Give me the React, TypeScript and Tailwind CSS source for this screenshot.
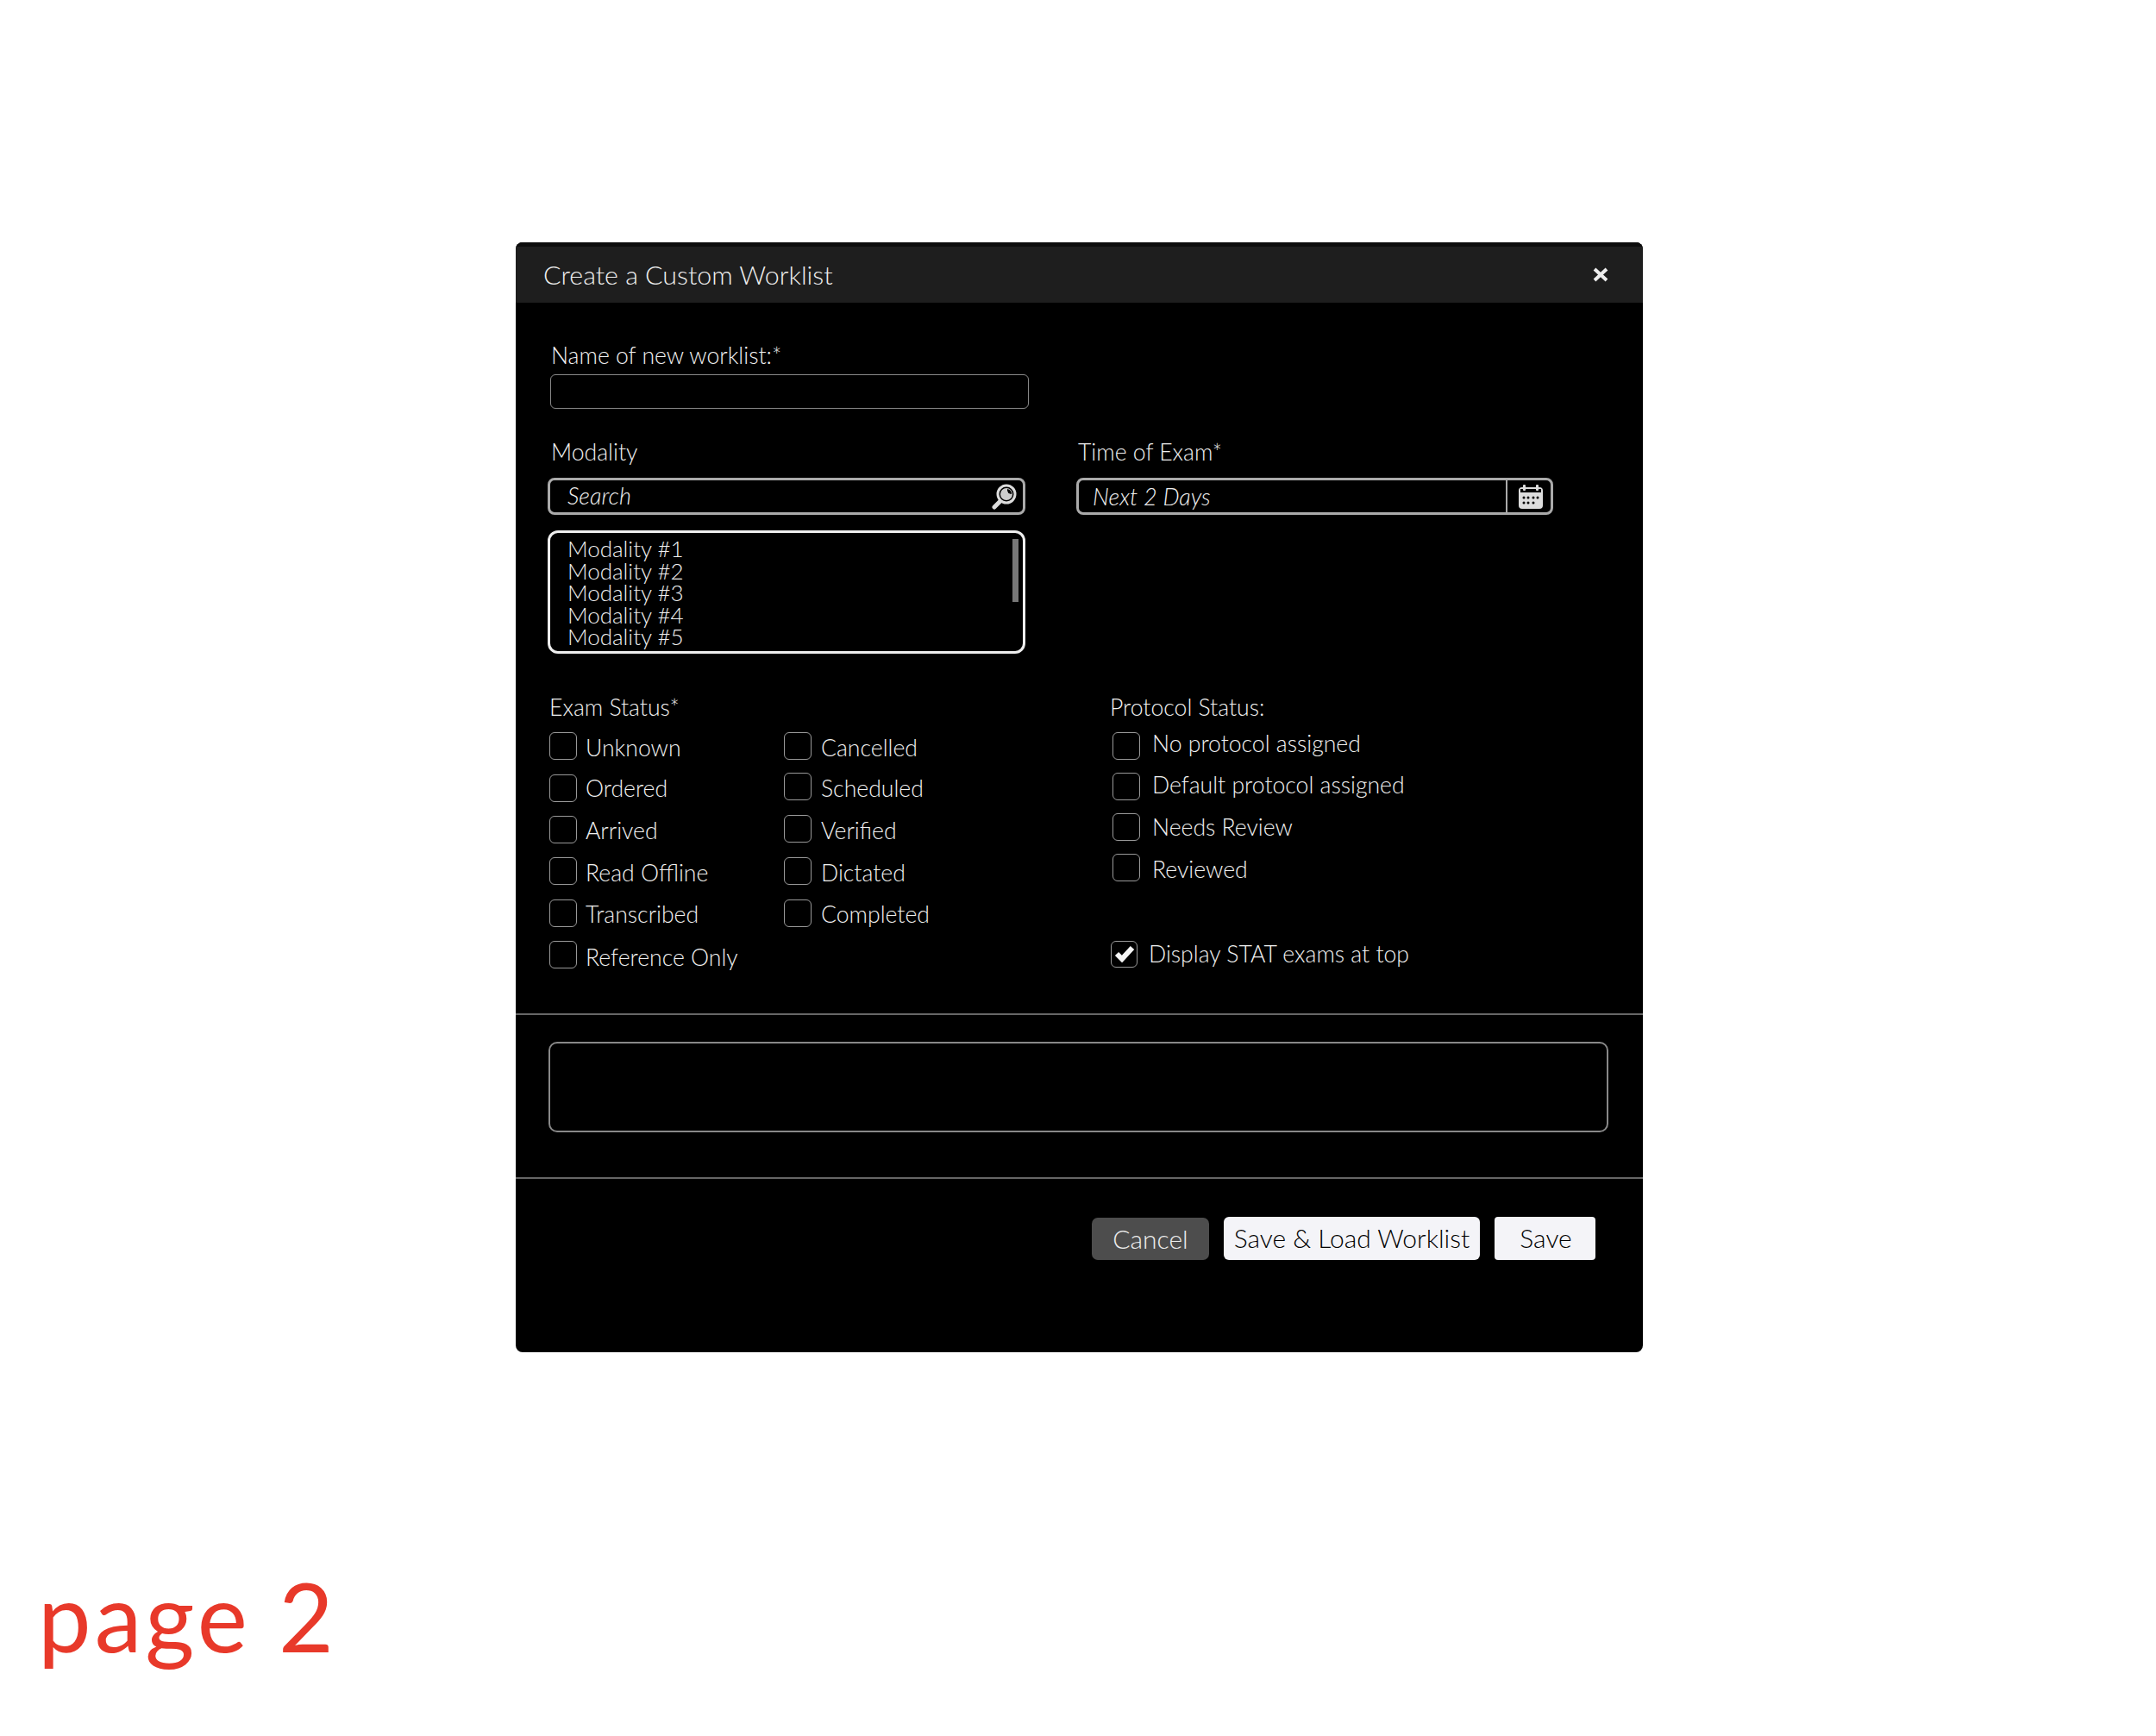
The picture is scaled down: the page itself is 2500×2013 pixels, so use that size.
const examLeft = [
    { label: "Unknown", row: "h-[49px]", text: "pt-[2px]" },
    { label: "Ordered", row: "h-[48px]", text: "pt-0" },
    { label: "Arrived", row: "h-[48px]", text: "pt-[1px]" },
    { label: "Read Offline", row: "h-[49px]", text: "pt-[2px]" },
    { label: "Transcribed", row: "h-[48px]", text: "pt-[1px]" },
    { label: "Reference Only", row: "h-[48px]", text: "pt-[3px]" },
];

const examRight = [
    { label: "Cancelled", row: "h-[47px]", text: "pt-[2px]" },
    { label: "Scheduled", row: "h-[49px]", text: "pt-[2px]" },
    { label: "Verified", row: "h-[49px]", text: "pt-[2px]" },
    { label: "Dictated", row: "h-[49px]", text: "pt-[2px]" },
    { label: "Completed", row: "h-[48px]", text: "pt-[1px]" },
];

const protocol = [
    { label: "No protocol assigned", row: "h-[47px]", text: "-mt-[3px]" },
    { label: "Default protocol assigned", row: "h-[47px]", text: "-mt-[2px]" },
    { label: "Needs Review", row: "h-[47px]", text: "pt-0" },
    { label: "Reviewed", row: "h-[100px]", text: "pt-[2px]" },
];

const modalities = ["Modality #1", "Modality #2", "Modality #3", "Modality #4", "Modality #5"];

type Item = { label: string; row: string; text: string };

const CheckRow = ({ item, gap }: { item: Item; gap: string }) => (
    <div className={`flex items-start ${item.row} ${gap}`}>
        <div className="w-[32px] h-[32px] shrink-0 rounded-[6px] border border-[#999]" />
        <span className={`text-[26.6px] leading-[32px] font-light text-[#f0f0f0] ${item.text}`}>{item.label}</span>
    </div>
);

const SearchIcon = () => (
    <svg width="29" height="30" viewBox="0 0 29 30">
        <line x1="3" y1="27" x2="11" y2="19" stroke="#ddd" strokeWidth="5" strokeLinecap="round" />
        <circle cx="17" cy="12" r="10" fill="#000" stroke="#ddd" strokeWidth="3" />
        <circle cx="17" cy="12" r="7" fill="#ccc" />
        <path d="M18 6a6 6 0 0 1 5 6a5 5 0 0 1-5-6z" fill="#000" />
    </svg>
);

const CalendarIcon = () => (
    <svg width="28" height="28" viewBox="0 0 28 28">
        <rect x="0" y="3" width="28" height="25" rx="4" fill="#ddd" />
        <rect x="2" y="5" width="24" height="4" fill="#000" />
        <rect x="5" y="0" width="3" height="7" rx="1" fill="#ddd" />
        <rect x="20" y="0" width="3" height="7" rx="1" fill="#ddd" />
        {[6, 11, 17, 22].map((x) => (
            <circle key={x} cx={x} cy="15" r="1.5" fill="#000" />
        ))}
        {[6, 11, 17].map((x) => (
            <circle key={x} cx={x} cy="21" r="1.5" fill="#000" />
        ))}
    </svg>
);

export default function App() {
    return (
        <div className="w-[2500px] h-[2013px] bg-white overflow-hidden font-['Lato','Liberation_Sans',sans-serif]">
            <div className="pt-[281px] pl-[598px]">
                <div className="flex flex-col w-[1307px] h-[1287px] bg-black rounded-[8px] overflow-hidden text-[#f0f0f0]">
                    <div className="flex items-center justify-between h-[70px] border-t-[5px] border-[#0d0d0d] bg-[#1e1e1e] pl-[32px] pr-[40px]">
                        <span className="text-[30.4px] font-light leading-none">Create a Custom Worklist</span>
                        <svg width="18" height="17" viewBox="0 0 18 17">
                            <path d="M2 2l14 13M16 2L2 15" stroke="#eee" strokeWidth="4" />
                        </svg>
                    </div>

                    <div className="h-[826px] pt-[43px] border-b-2 border-[#666]">
                        <div className="pl-[41px] text-[26.6px] font-light leading-[36px]">Name of new worklist:*</div>
                        <div className="ml-[40px] mt-[4px] w-[555px] h-[40px] rounded-[6px] border border-[#888]" />

                        <div className="grid grid-cols-[652px_1fr] mt-[32px]">
                            <div>
                                <div className="pl-[41px] text-[26.6px] font-light leading-[36px]">Modality</div>
                                <div className="ml-[37px] mt-[12px] w-[554px] h-[43px] flex items-center justify-between pl-[20px] pr-[7px] rounded-[8px] border-[3px] border-[#aaa]">
                                    <span className="text-[27px] font-light italic">Search</span>
                                    <SearchIcon />
                                </div>
                                <div className="relative ml-[37px] mt-[18px] w-[554px] h-[143px] rounded-[12px] border-[3px] border-[#eee] pl-[20px] pt-[6px]">
                                    {modalities.map((m) => (
                                        <div key={m} className="text-[26px] font-light leading-[25.5px]">
                                            {m}
                                        </div>
                                    ))}
                                    <div className="absolute right-[5px] top-[7px] w-[7px] h-[73px] bg-[#777]" />
                                </div>
                            </div>
                            <div>
                                <div className="text-[26.6px] font-light leading-[36px]">Time of Exam*</div>
                                <div className="-ml-[2px] mt-[12px] w-[553px] h-[43px] flex rounded-[8px] border-[3px] border-[#aaa]">
                                    <div className="flex-1 flex items-center pl-[16px] pt-[2px] border-r-2 border-[#aaa]">
                                        <span className="text-[27px] font-light italic">Next 2 Days</span>
                                    </div>
                                    <div className="w-[50px] pl-[3px] flex items-center justify-center">
                                        <CalendarIcon />
                                    </div>
                                </div>
                            </div>
                        </div>

                        <div className="grid grid-cols-[689px_1fr] mt-[44px]">
                            <div className="pl-[39px]">
                                <div className="text-[26.6px] font-light leading-[36px]">Exam Status*</div>
                                <div className="flex mt-[11px]">
                                    <div className="w-[272px]">
                                        {examLeft.map((item) => (
                                            <CheckRow key={item.label} item={item} gap="gap-[10px]" />
                                        ))}
                                    </div>
                                    <div>
                                        {examRight.map((item) => (
                                            <CheckRow key={item.label} item={item} gap="gap-[11px]" />
                                        ))}
                                    </div>
                                </div>
                            </div>
                            <div>
                                <div className="text-[26.6px] font-light leading-[36px]">Protocol Status:</div>
                                <div className="mt-[11px]">
                                    {protocol.map((item) => (
                                        <CheckRow key={item.label} item={item} gap="gap-[14px] ml-[3px]" />
                                    ))}
                                </div>
                                <div className="flex items-center gap-[13px] ml-[1px]">
                                    <div className="flex items-center justify-center w-[31px] h-[31px] rounded-[6px] border border-[#999]">
                                        <svg width="24" height="20" viewBox="0 0 24 20">
                                            <path d="M3 10l6 6L21 3" fill="none" stroke="#f6f6f6" strokeWidth="6" />
                                        </svg>
                                    </div>
                                    <span className="text-[26.6px] font-light leading-[32px]">Display STAT exams at top</span>
                                </div>
                            </div>
                        </div>
                    </div>

                    <div className="h-[190px] px-[38px] pt-[31px] border-b-2 border-[#666]">
                        <div className="w-[1229px] h-[105px] rounded-[10px] border-2 border-[#888]" />
                    </div>

                    <div className="flex justify-end items-start gap-[17px] pt-[44px] pr-[55px]">
                        <button className="w-[136px] h-[49px] mt-[1px] pb-[2px] rounded-[7px] bg-[#4d4d4d] text-[30px] font-light leading-none text-[#eee]">
                            Cancel
                        </button>
                        <button className="w-[297px] h-[50px] pb-[3px] rounded-[6px] bg-[#f4f4f8] text-[30px] font-light leading-none text-black">
                            Save & Load Worklist
                        </button>
                        <button className="w-[117px] h-[50px] pl-[2px] pb-[3px] rounded-[4px] bg-[#f4f4f8] text-[30px] font-light leading-none text-black">
                            Save
                        </button>
                    </div>
                </div>
            </div>

            <div className="mt-[245px] pl-[44px] text-[110px] leading-[120px] tracking-[4px] text-[#e8392a]">page 2</div>
        </div>
    );
}
